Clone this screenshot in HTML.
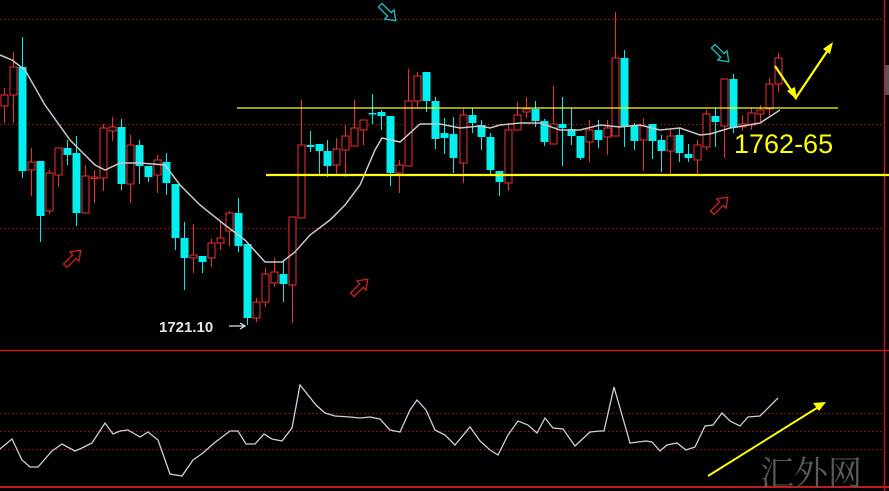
<!DOCTYPE html>
<html><head><meta charset="utf-8"><style>
html,body{margin:0;padding:0;background:#000;width:889px;height:491px;overflow:hidden}
svg{display:block}
</style></head><body>
<svg id="s" width="889" height="491" viewBox="0 0 889 491" xmlns="http://www.w3.org/2000/svg">
<defs>
<path id="ar" d="M-11,-2.5 L2,-2.5 L2,-6.5 L11,0 L2,6.5 L2,2.5 L-11,2.5 Z" fill="none" stroke-width="1.4"/>
</defs>
<rect width="889" height="491" fill="#000"/>
<g stroke="#8a1010" stroke-width="1" stroke-dasharray="2,2">
<line x1="0" y1="19.5" x2="884" y2="19.5"/>
<line x1="0" y1="124.5" x2="884" y2="124.5"/>
<line x1="0" y1="228.5" x2="884" y2="228.5"/>
<line x1="0" y1="413.5" x2="884" y2="413.5"/>
<line x1="0" y1="431.5" x2="884" y2="431.5"/>
<line x1="0" y1="449.5" x2="884" y2="449.5"/>
</g>
<line x1="0" y1="350.5" x2="889" y2="350.5" stroke="#c01a1a" stroke-width="1.5"/>
<line x1="0" y1="487" x2="889" y2="487" stroke="#c01a1a" stroke-width="2"/>
<line x1="884.5" y1="0" x2="884.5" y2="491" stroke="#c01a1a" stroke-width="1.5"/>
<rect x="885" y="65" width="4" height="30" fill="#555"/>
<g id="candles"></g>
<polyline id="ma" fill="none" stroke="#c8c8c8" stroke-width="1.5"/>
<line x1="237" y1="108" x2="838" y2="108" stroke="#ffff00" stroke-width="1.2"/>
<line x1="266" y1="175" x2="889" y2="175" stroke="#ffff00" stroke-width="2.2"/>
<polyline id="osc" fill="none" stroke="#d0d0d0" stroke-width="1.3"/>
<g stroke="#1ab8b8">
<use href="#ar" transform="translate(388,13) rotate(45)"/>
<use href="#ar" transform="translate(721,54) rotate(45)"/>
</g>
<g stroke="#c42020">
<use href="#ar" transform="translate(73,258) rotate(-45)"/>
<use href="#ar" transform="translate(360,287) rotate(-45)"/>
<use href="#ar" transform="translate(720,205) rotate(-45)"/>
</g>
<text x="734" y="153" font-family="Liberation Sans, sans-serif" font-size="27" fill="#ffff00">1762-65</text>
<text x="159" y="332" font-family="Liberation Sans, sans-serif" font-size="15" font-weight="bold" fill="#e4e8f0">1721.10</text>
<line x1="229" y1="326" x2="244" y2="326" stroke="#e4e8f0" stroke-width="1.2"/>
<path d="M240,323 L245,326 L240,329" fill="none" stroke="#e4e8f0" stroke-width="1.2"/>
<g stroke="#ffff00" stroke-width="2.2" fill="none">
<line x1="775" y1="66" x2="795" y2="96"/>
<line x1="795" y1="99" x2="830" y2="47"/>
</g>
<path d="M797,100 L787,91 L795,87 Z" fill="#ffff00"/>
<path d="M833,42 L823,49 L830,54 Z" fill="#ffff00"/>
<line x1="708" y1="476" x2="820" y2="406" stroke="#ffff00" stroke-width="2"/>
<path d="M826,402 L813,403 L819,411 Z" fill="#ffff00"/>
<text x="760" y="485" font-family="Noto Serif CJK SC, serif" font-size="34" fill="#5a5a5a">汇外网</text>
</svg>
<script>
var C=[
[4,95,106,88,123,'r'],[13,67,95,52,123,'r'],[22,67,171,37,178,'c'],[31,162,170,148,196,'r'],[40,161,216,161,242,'c'],
[49,173,211,170,214,'r'],[58,148,175,148,187,'r'],[67,148,155,140,165,'c'],[76,153,213,136,226,'c'],[85,176,213,165,213,'r'],
[94,177,178,170,203,'r'],[103,128,178,124,191,'r'],[112,127,131,117,141,'r'],[121,127,184,119,190,'c'],[130,145,184,135,203,'r'],
[139,145,166,140,184,'c'],[148,166,177,166,182,'c'],[157,160,175,155,193,'r'],[166,162,183,153,195,'c'],[175,184,238,184,250,'c'],
[184,238,258,222,290,'c'],[193,255,258,224,273,'r'],[202,256,262,256,273,'c'],[211,243,258,239,267,'r'],[220,238,243,222,250,'r'],
[229,213,231,211,246,'r'],[238,213,246,198,252,'c'],[247,244,318,244,325,'c'],[256,302,318,298,322,'r'],[265,274,302,268,307,'r'],
[274,272,283,258,287,'r'],[283,274,284,260,302,'c'],[292,217,285,217,323,'r'],[301,145,218,100,218,'r'],[310,145,147,131,152,'c'],
[319,144,151,144,174,'c'],[327,151,166,140,177,'c'],[336,149,165,138,174,'r'],[345,136,150,125,177,'r'],[354,128,146,100,146,'r'],
[363,120,130,120,145,'r'],[372,113,114,94,124,'c'],[381,112,116,110,130,'c'],[390,116,173,116,186,'c'],[399,165,173,160,193,'r'],
[408,101,166,69,166,'r'],[417,76,101,72,108,'r'],[426,72,101,72,112,'c'],[435,101,139,97,149,'c'],[444,133,138,118,154,'c'],
[453,134,158,117,173,'c'],[463,115,163,109,183,'r'],[472,115,123,108,133,'c'],[481,125,137,120,150,'c'],[490,137,170,133,175,'c'],
[499,171,182,171,196,'c'],[508,130,183,123,191,'r'],[517,115,130,102,130,'r'],[526,109,112,97,118,'r'],[535,109,121,101,127,'c'],
[544,121,142,119,146,'c'],[553,124,144,86,144,'r'],[562,124,128,97,166,'c'],[571,129,136,108,145,'c'],[580,136,158,136,160,'c'],
[589,130,142,120,162,'r'],[598,130,140,120,148,'c'],[607,128,137,120,155,'r'],[615,58,136,12,136,'r'],[624,58,126,50,147,'c'],
[634,126,141,123,150,'c'],[643,126,140,118,171,'r'],[652,124,141,124,159,'c'],[661,140,151,135,172,'c'],[670,136,151,130,175,'r'],
[679,135,153,128,162,'c'],[688,154,158,144,162,'c'],[697,145,160,140,174,'r'],[706,114,147,110,150,'r'],[715,116,122,108,147,'c'],
[724,79,126,79,158,'r'],[733,79,128,74,133,'c'],[742,124,127,115,131,'r'],[751,113,125,108,130,'r'],[760,110,114,105,122,'r'],
[769,84,109,78,115,'r'],[778,58,84,53,92,'r']];
var h='';
C.forEach(function(c){var x=c[0],col=c[5]=='r'?'#f03030':'#00f0f0';
h+='<line x1="'+(x+.5)+'" y1="'+c[3]+'" x2="'+(x+.5)+'" y2="'+c[4]+'" stroke="'+col+'" stroke-width="1"/>';
var hh=Math.max(c[2]-c[1],1.5);
if(c[5]=='r'){h+='<rect x="'+(x-3)+'" y="'+c[1]+'" width="7" height="'+hh+'" fill="#000" stroke="'+col+'" stroke-width="1"/>';}
else{h+='<rect x="'+(x-3.5)+'" y="'+c[1]+'" width="8" height="'+hh+'" fill="'+col+'"/>';}
});
document.getElementById('candles').innerHTML=h;
document.getElementById('ma').setAttribute('points','0,55 12,60 25,70 45,105 70,140 95,165 105,170 120,163 140,163 165,165 180,185 200,205 225,225 245,240 265,262 282,262 295,252 310,235 330,220 345,205 360,185 375,150 382,138 400,142 420,124 440,124 460,128 480,126 490,128 500,125 520,123 540,123 560,130 580,130 600,125 620,127 640,125 660,130 680,128 700,135 710,134 730,128 760,123 780,110');
document.getElementById('osc').setAttribute('points','0,449 12,439 22,460 30,467 38,467 52,451 62,444 75,451 82,448 92,443 105,423 113,434 120,431 128,430 140,437 148,432 158,440 170,474 182,476 193,460 203,453 213,444 222,437 230,431 238,431 246,444 255,444 264,434 272,439 282,441 292,428 300,385 316,405 325,413 335,416 350,417 360,418 370,417 380,419 390,430 400,432 410,410 417,400 426,410 435,430 445,435 455,445 470,427 480,441 490,450 498,455 508,435 518,421 528,425 537,433 545,418 553,428 563,429 575,446 590,432 600,431 604,431 614,387 630,443 646,441 652,442 660,451 667,445 677,443 686,450 695,447 705,426 713,425 722,413 730,421 740,426 748,417 760,416 778,398');
</script>
</body></html>
